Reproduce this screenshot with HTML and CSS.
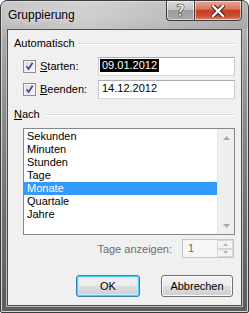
FILE: index.html
```html
<!DOCTYPE html>
<html lang="de">
<head>
<meta charset="utf-8">
<title>Gruppierung</title>
<link rel="stylesheet" href="styles.css">
</head>
<body>
<div class="window">
  <div class="titlebar">
    <span class="title">Gruppierung</span>
    <div class="caption-btns">
      <div class="cbtn help"><span>?</span></div>
      <div class="cbtn close">
        <svg width="14" height="12" viewBox="0 0 14 12"><path d="M2 1 L12 11 M12 1 L2 11" stroke="#3a1a14" stroke-width="4.4" stroke-linecap="square" fill="none"/><path d="M2 1 L12 11 M12 1 L2 11" stroke="#ffffff" stroke-width="2.4" stroke-linecap="square" fill="none"/></svg>
      </div>
    </div>
  </div>
  <div class="client">
    <div class="group-head head-auto"><span>Automatisch</span><i class="rule"></i></div>
    <div class="row row1">
      <div class="chk">
        <span class="box"><svg width="11" height="11" viewBox="0 0 11 11"><path d="M2.5 5.2 L4.6 8 L8.6 1.8" stroke="#3c4f8c" stroke-width="1.7" fill="none"/></svg></span>
        <span><u>S</u>tarten:</span>
      </div>
      <div class="textbox"><span class="sel">09.01.2012</span></div>
    </div>
    <div class="row row2">
      <div class="chk">
        <span class="box"><svg width="11" height="11" viewBox="0 0 11 11"><path d="M2.5 5.2 L4.6 8 L8.6 1.8" stroke="#3c4f8c" stroke-width="1.7" fill="none"/></svg></span>
        <span><u>B</u>eenden:</span>
      </div>
      <div class="textbox"><span class="val">14.12.2012</span></div>
    </div>
    <div class="group-head head-nach"><span><u>N</u>ach</span><i class="rule"></i></div>
    <div class="listbox">
      <ul class="items">
        <li>Sekunden</li>
        <li>Minuten</li>
        <li>Stunden</li>
        <li>Tage</li>
        <li class="selected">Monate</li>
        <li>Quartale</li>
        <li>Jahre</li>
      </ul>
      <div class="scrollbar">
        <svg width="7" height="4" viewBox="0 0 7 4"><path d="M3.5 0 L7 4 L0 4 Z" fill="#a9a9a9"/></svg>
        <svg width="7" height="4" viewBox="0 0 7 4"><path d="M0 0 L7 0 L3.5 4 Z" fill="#a9a9a9"/></svg>
      </div>
    </div>
    <div class="row tage-row">
      <span class="disabled">Tage anzeigen:</span>
      <div class="spin">
        <span class="spin-val">1</span>
        <div class="spin-btns">
          <span class="sb"><svg width="5" height="3" viewBox="0 0 5 3"><path d="M2.5 0 L5 3 L0 3 Z" fill="#b4b4b4"/></svg></span>
          <span class="sb"><svg width="5" height="3" viewBox="0 0 5 3"><path d="M0 0 L5 0 L2.5 3 Z" fill="#b4b4b4"/></svg></span>
        </div>
      </div>
    </div>
    <div class="buttons">
      <div class="btn default">OK</div>
      <div class="btn cancel">Abbrechen</div>
    </div>
  </div>
</div>
</body>
</html>
```

FILE: styles.css
```css
* { box-sizing: border-box; }
html, body { margin: 0; padding: 0; }
body {
  width: 249px;
  height: 313px;
  overflow: hidden;
  background: #ffffff;
  font-family: "Liberation Sans", Arial, sans-serif;
  font-size: 11px;
  color: #000;
}
.window {
  width: 249px;
  height: 313px;
  border: 1px solid #3a3a3a;
  border-radius: 7px 7px 2px 2px;
  padding: 28px 6px 6px 6px;
  position: relative;
  background:
    linear-gradient(to bottom, #c4c4c4 0px, #bdbdbd 20px, #a9a9a9 40px, #8a8a8a 120px, #6e6e6e 220px, #5c5c5c 312px);
  box-shadow: inset 0 0 0 1px #d8d8d8;
}
.titlebar {
  position: absolute;
  left: 0; right: 0; top: 0;
  height: 28px;
  display: flex;
  align-items: flex-start;
  border-radius: 6px 6px 0 0;
  background: linear-gradient(to right, rgba(255,255,255,0.05), rgba(255,255,255,0.25) 35%, rgba(255,255,255,0.05) 60%, rgba(0,0,0,0.08));
}
.title {
  font-size: 12px;
  color: #000;
  margin: 7px 0 0 7px;
  line-height: 15px;
  text-shadow: 0 0 6px rgba(255,255,255,0.9);
}
.caption-btns {
  margin-left: auto;
  margin-right: 6px;
  display: flex;
  margin-top: -1px;
}
.cbtn {
  height: 21px;
  display: flex;
  align-items: center;
  justify-content: center;
  border: 1px solid #3d3d3d;
  box-shadow: inset 0 0 0 1px rgba(255,255,255,0.55);
}
.help {
  width: 28px;
  border-radius: 0 0 0 4px;
  border-right: none;
  background: linear-gradient(to bottom, #dcdcdc 0%, #c4c4c4 45%, #9d9d9d 50%, #a9a9a9 100%);
}
.help span {
  font-family: "DejaVu Sans", sans-serif;
  font-weight: bold;
  font-size: 15px;
  color: #fff;
  -webkit-text-stroke: 0.6px #3a3a3a;
  margin-top: 1px;
}
.close {
  width: 48px;
  border-radius: 0 0 4px 0;
  background: linear-gradient(to bottom, #e9a693 0%, #dc7a62 40%, #c63c22 52%, #cd5038 80%, #e08b6f 100%);
}
.close svg { margin-top: 1px; }

.client {
  width: 235px;
  height: 277px;
  background: #f0f0f0;
  border: 1px solid #4e4e4e;
  box-shadow: 0 0 0 1px #b9b9b9;
  display: flex;
  flex-direction: column;
}
.group-head {
  display: flex;
  align-items: center;
  padding: 0 6px 0 6px;
  height: 13px;
  line-height: 13px;
}
.group-head span { margin-right: 4px; }
.rule {
  flex: 1;
  height: 2px;
  border-top: 1px solid #d5dfe5;
  border-bottom: 1px solid #ffffff;
  margin-top: 1px;
}
.head-auto { margin-top: 7px; }
.head-nach { margin-top: 9px; }
.row {
  display: flex;
  align-items: center;
  height: 19px;
  padding-left: 15px;
}
.row1 { margin-top: 7px; }
.row2 { margin-top: 4px; }
.chk {
  display: flex;
  align-items: center;
  width: 75px;
  line-height: 13px;
}
.box {
  width: 13px;
  height: 13px;
  border: 1px solid #8f8f8f;
  background: linear-gradient(135deg, #dcdcdc, #f8f8f8);
  box-shadow: inset 0 0 0 1px #f4f4f4;
  display: flex;
  align-items: center;
  justify-content: center;
  margin-right: 4px;
}
.textbox {
  width: 137px;
  height: 19px;
  background: #fff;
  border: 1px solid #abadb3;
  border-color: #abadb3 #c7cad0 #d6d9de #c7cad0;
  padding: 1px 0 0 1px;
  line-height: 13px;
}
.sel {
  display: inline-block;
  background: #000;
  color: #fff;
  padding: 0 2px 0 2px;
  height: 13px;
}
.val { padding-left: 2px; }
.listbox {
  margin: 7px 0 0 15px;
  width: 212px;
  height: 107px;
  border: 1px solid #828790;
  background: #fff;
  display: flex;
}
.items {
  list-style: none;
  margin: 0;
  padding: 1px 0 0 0;
  flex: 1;
}
.items li {
  height: 13px;
  line-height: 13px;
  padding-left: 3px;
}
.items li.selected {
  background: #3399ff;
  color: #fff;
}
.scrollbar {
  width: 17px;
  background: #efefef;
  border-left: 1px solid #e6e6e6;
  display: flex;
  flex-direction: column;
  align-items: center;
  justify-content: space-between;
  padding: 7px 0 6px 1px;
}
.tage-row {
  margin-top: 4px;
  padding-left: 0;
  justify-content: flex-end;
  padding-right: 7px;
}
.disabled {
  color: #6d6d6d;
  margin-right: 10px;
}
.spin {
  width: 52px;
  height: 19px;
  border: 1px solid #c2c4c8;
  background: #f7f7f7;
  display: flex;
}
.spin-val {
  flex: 1;
  color: #6d6d6d;
  padding: 2px 0 0 5px;
  line-height: 13px;
}
.spin-btns {
  width: 16px;
  display: flex;
  flex-direction: column;
  padding: 0;
}
.sb {
  flex: 1;
  display: flex;
  align-items: center;
  justify-content: center;
  border: 1px solid #d5d5d5;
  background: #f3f3f3;
}
.buttons {
  margin-top: 17px;
  display: flex;
  justify-content: flex-end;
  padding-right: 8px;
  gap: 21px;
}
.btn {
  height: 22px;
  border: 1px solid #707070;
  border-radius: 3px;
  background: linear-gradient(to bottom, #f2f2f2 0%, #ebebeb 50%, #dddddd 51%, #cfcfcf 100%);
  box-shadow: inset 0 0 0 1px #fcfcfc;
  display: flex;
  align-items: center;
  justify-content: center;
  line-height: 13px;
}
.btn.default {
  width: 64px;
  border-color: #3c7fb1;
  box-shadow: inset 0 0 0 1px #48d0f2, inset 0 0 0 2px #c5ecfa;
  background: linear-gradient(to bottom, #eaf6fd 0%, #d9f0fc 50%, #bee6fd 51%, #a7d9f5 100%);
  background: linear-gradient(to bottom, #f2f2f2 0%, #ebebeb 50%, #dddddd 51%, #cfcfcf 100%);
}
.btn.cancel { width: 72px; }
```
